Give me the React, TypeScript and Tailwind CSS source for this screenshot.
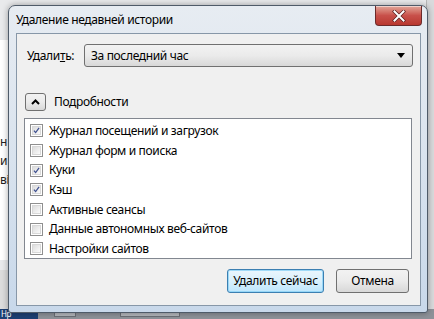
import React from "react";

const font = { fontFamily: '"Noto Sans", "Open Sans", sans-serif' };

function Check({ checked }: { checked: boolean }) {
  return (
    <div className="w-[13px] h-[13px] border border-[#8f8f8f] bg-white p-[1px] shrink-0">
      <div className="w-full h-full bg-gradient-to-br from-[#dcdcdc] to-[#fbfbfb] border border-[#d8d8d8] flex items-center justify-center">
        {checked && (
          <svg width="9" height="9" viewBox="0 0 9 9">
            <path d="M1.2 4.6 L3.4 7.2 L7.8 1.2" fill="none" stroke="#3d4f8f" strokeWidth="1.6" />
          </svg>
        )}
      </div>
    </div>
  );
}

const items: [string, boolean][] = [
  ["Журнал посещений и загрузок", true],
  ["Журнал форм и поиска", false],
  ["Куки", true],
  ["Кэш", true],
  ["Активные сеансы", false],
  ["Данные автономных веб-сайтов", false],
  ["Настройки сайтов", false],
];

export default function App() {
  return (
    <div className="relative w-[434px] h-[319px] overflow-hidden bg-[#e9eaec] text-[12px] tracking-[-0.35px] text-black" style={font}>
      {/* background: window behind on the left */}
      <div className="absolute left-0 top-[40px] w-[10px] h-[220px] bg-white border-r border-[#c8c8c8]">
        <div className="mt-[92px] flex flex-col text-[12px] leading-[19px] text-[#222]">
          <span>н</span>
          <span>и</span>
          <span>ві</span>
        </div>
      </div>
      <div className="absolute left-0 top-[270px] w-[10px] h-[40px] bg-[#dcdcdc]" />
      {/* right background strip */}
      <div className="absolute right-0 top-0 w-[8px] h-full bg-[#d9dadc] border-l border-[#b8b8b8]" />
      {/* taskbar */}
      <div className="absolute left-0 bottom-0 w-full h-[10px] bg-[#8e9299] flex">
        <div className="w-[38px] h-full bg-[#1d3f73] text-white text-[8px] leading-[10px] pl-[1px]">Нр</div>
        <div className="ml-[16px] mt-[1px] w-[22px] h-[7px] bg-[#b5b8bd] border border-[#6d7077]" />
        <div className="ml-[44px] mt-[1px] w-[60px] h-[7px] bg-[#b5b8bd] border border-[#6d7077]" />
      </div>

      {/* window */}
      <div className="absolute left-[8px] top-[5px] w-[420px] h-[308px] rounded-t-[7px] rounded-b-[3px] border border-[#4f5b69] bg-gradient-to-b from-[#e7ecf2] via-[#d9e3ee] to-[#c8d8ea] flex flex-col shadow-[0_0_6px_rgba(0,0,0,0.35)]">
        {/* title bar */}
        <div className="h-[27px] flex items-start shrink-0">
          <div className="pl-[7px] pt-[5px] text-[12px] leading-[18px] text-black">Удаление недавней истории</div>
          <div className="ml-auto mr-[5px] w-[47px] h-[20px] rounded-b-[4px] border border-t-0 border-[#6b2a2a] bg-gradient-to-b from-[#e0a69a] via-[#c8504a] to-[#b8372f] flex items-center justify-center shadow-[inset_0_1px_0_rgba(255,255,255,0.5)]">
            <svg width="14" height="12" viewBox="0 0 14 12">
              <path d="M2.5 1.5 L11.5 10.5 M11.5 1.5 L2.5 10.5" stroke="#5a1f1f" strokeWidth="3.4" strokeLinecap="square" />
              <path d="M2.5 1.5 L11.5 10.5 M11.5 1.5 L2.5 10.5" stroke="#ffffff" strokeWidth="2" strokeLinecap="square" />
            </svg>
          </div>
        </div>
        {/* client area */}
        <div className="ml-[7px] mr-[6px] mb-[6px] flex-1 border border-[#8797a8] bg-[#f0f0f0] flex flex-col px-[7px]">
          {/* delete row */}
          <div className="mt-[10px] flex items-center h-[23px]">
            <span className="ml-[3px] w-[56px]">
              Удали<span className="underline">т</span>ь:
            </span>
            <div className="ml-[1px] w-[329px] h-[23px] rounded-[3px] border border-[#707070] bg-gradient-to-b from-[#f2f2f2] via-[#ebebeb] to-[#d8d8d8] flex items-center pl-[6px] pr-[7px]">
              <span>За последний час</span>
              <svg className="ml-auto" width="8" height="5" viewBox="0 0 8 5">
                <path d="M0 0 L8 0 L4 5 Z" fill="#000" />
              </svg>
            </div>
          </div>
          {/* details */}
          <div className="mt-[26px] flex items-center h-[18px]">
            <div className="ml-[1px] w-[21px] h-[18px] rounded-[3px] border border-[#707070] bg-gradient-to-b from-[#f2f2f2] via-[#ebebeb] to-[#d8d8d8] flex items-center justify-center">
              <svg width="9" height="6" viewBox="0 0 9 6">
                <path d="M1 5 L4.5 1.5 L8 5" fill="none" stroke="#000" strokeWidth="2" />
              </svg>
            </div>
            <span className="ml-[8px]">Подробности</span>
          </div>
          {/* list */}
          <div className="mt-[7px] w-[388px] h-[141px] border border-[#828790] bg-white pt-[2px]">
            {items.map(([label, checked]) => (
              <div key={label} className="flex items-center h-[19.7px] pl-[5px]">
                <Check checked={checked} />
                <span className="ml-[6px]">{label}</span>
              </div>
            ))}
          </div>
          {/* buttons */}
          <div className="mt-[10px] flex justify-end pr-[4px] gap-[12px]">
            <div className="w-[97px] h-[24px] rounded-[3px] border border-[#3c7fb1] bg-gradient-to-b from-[#eaf6fd] via-[#d9f0fc] to-[#bee6fd] flex items-center justify-center shadow-[inset_0_0_0_1px_rgba(140,210,245,0.8)]">
              Удалить сейчас
            </div>
            <div className="w-[73px] h-[24px] rounded-[3px] border border-[#707070] bg-gradient-to-b from-[#f2f2f2] via-[#ebebeb] to-[#d8d8d8] flex items-center justify-center">
              Отмена
            </div>
          </div>
        </div>
      </div>
    </div>
  );
}
